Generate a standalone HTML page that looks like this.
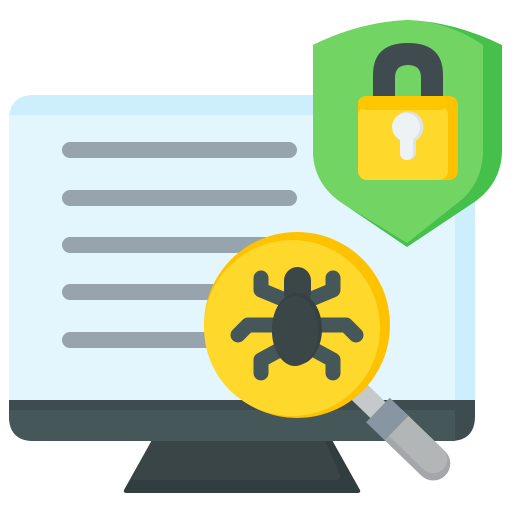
<!DOCTYPE html>
<html><head><style>html,body{margin:0;padding:0;background:#fff;width:512px;height:512px;overflow:hidden}</style></head>
<body>
<svg width="512" height="512" viewBox="0 0 512 512" xmlns="http://www.w3.org/2000/svg">
<!-- stand -->
<path d="M152 440 L332 440 L360 490 Q361 493 357 493 L127 493 Q123 493 124 490 Z" fill="#323d3f"/>
<path d="M152 440 L325 440 L340 475 Q341 480 335 480 L131 480 Z" fill="#394547"/>
<!-- monitor -->
<path d="M34 95 H450 Q475 95 475 120 V400 H9 V120 Q9 95 34 95 Z" fill="#cdeefd"/>
<rect x="9" y="115" width="446" height="285" fill="#e3f6fe"/>
<path d="M9 400 H475 V416 Q475 441 450 441 H34 Q9 441 9 416 Z" fill="#3f4c4f"/>
<path d="M9 410 H455 V441 H34 Q9 441 9 416 Z" fill="#465759"/>
<!-- lines -->
<g stroke="#97a3ad" stroke-width="16" stroke-linecap="round">
<line x1="70" y1="150" x2="289" y2="150"/>
<line x1="70" y1="198" x2="289" y2="198"/>
<line x1="70" y1="245" x2="289" y2="245"/>
<line x1="70" y1="292" x2="289" y2="292"/>
<line x1="70" y1="340" x2="289" y2="340"/>
</g>
<!-- shield -->
<path d="M313 45 Q360 22 408 20 Q455 22 502 45 V150 Q502 185 470 205 L407 247 L345 205 Q313 185 313 150 Z" fill="#44c04b"/>
<path d="M313 45 Q360 22 408 20 Q450 22 483 45 V150 Q483 185 455 205 L407 243 L345 205 Q313 185 313 150 Z" fill="#72d563"/>
<!-- lock -->
<path d="M373 98 V75 Q373 43 408 43 Q443 43 443 75 V98 H421 V78 Q421 65 408 65 Q395 65 395 78 V98 Z" fill="#3f4b4f"/>
<rect x="358" y="96" width="100" height="84" rx="9" fill="#ffc200"/>
<rect x="358" y="106" width="90" height="74" rx="9" fill="#ffd82c"/>
<rect x="358" y="96" width="90" height="14" rx="9" fill="#ffc700"/>
<circle cx="408" cy="127" r="15.5" fill="#dde4e9"/>
<rect x="400" y="130" width="16" height="30" rx="8" fill="#dde4e9"/>
<circle cx="406" cy="127" r="14" fill="#edf2f5"/>
<rect x="400" y="130" width="13" height="30" rx="6.5" fill="#edf2f5"/>
<!-- handle -->
<g transform="translate(352,385) rotate(44)">
<rect x="0" y="-11" width="45" height="22" fill="#c6c9ca"/>
<rect x="40" y="-17" width="90" height="34" rx="17" fill="#a3a7a9"/>
<rect x="40" y="-17" width="84" height="28" rx="14" fill="#b3b6b7"/>
<rect x="36" y="-17" width="26" height="34" fill="#8896a2"/>
</g>
<!-- magnifier -->
<circle cx="297" cy="325" r="93" fill="#ffc200"/>
<circle cx="292" cy="328" r="88" fill="#ffd82c"/>
<!-- bug legs -->
<g stroke="#465759" stroke-width="15" stroke-linecap="round" stroke-linejoin="round" fill="none">
<polyline points="261,278 261,290 285,300"/>
<polyline points="333,278 333,290 309,300"/>
<polyline points="238,335 248,325 280,325"/>
<polyline points="356,335 346,325 314,325"/>
<polyline points="261,373 261,360 283,348"/>
<polyline points="333,373 333,360 311,348"/>
</g>
<rect x="284" y="267" width="27" height="40" rx="13.5" fill="#3b4648"/>
<ellipse cx="297" cy="329" rx="25" ry="36" fill="#354144"/>
<ellipse cx="295" cy="331" rx="23" ry="35" fill="#3b4648"/>
</svg>
</body></html>
